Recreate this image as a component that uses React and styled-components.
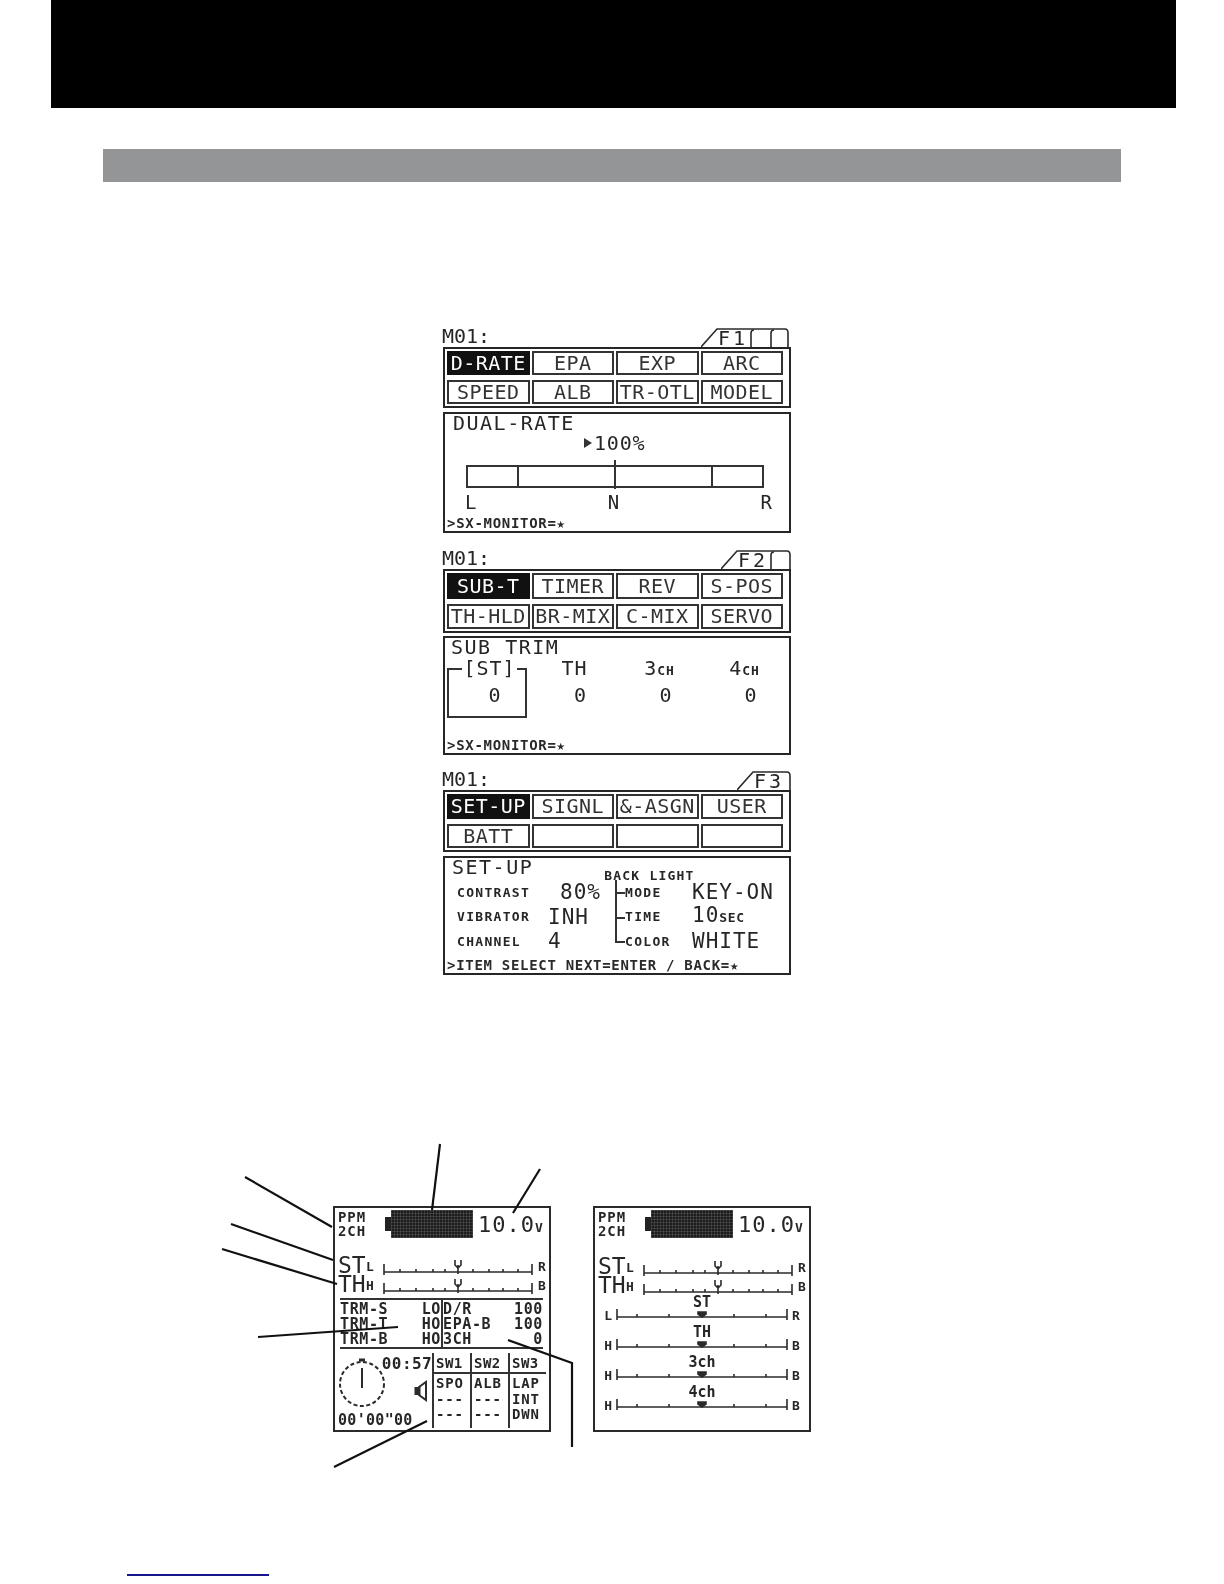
import React from "react";
import styled, { createGlobalStyle } from "styled-components";

const Global = createGlobalStyle`
  html, body { margin: 0; padding: 0; background: #fff; }
  body { font-family: "DejaVu Sans Mono", "Liberation Mono", monospace; color: #262626; }
`;
const Page = styled.div`position: relative; width: 1224px; height: 1584px; overflow: hidden; background: #fff;`;
const BlackHeader = styled.header`width: 1125px; height: 108px; margin-left: 51px; background: #000;`;
const SectionBar = styled.div`width: 1018px; height: 33px; margin: 41px 0 0 103px; background: #939597;`;
const ScreenStack = styled.div`display: flex; flex-direction: column; width: 348px; margin: 145px 0 0 443px; filter: blur(.35px);`;
const Screen = styled.section`display: flex; flex-direction: column; width: 348px; height: ${p => p.$h}px;`;
const TopRow = styled.div`display: flex; justify-content: space-between; height: 20px; font-size: 20px; line-height: 19px; margin-left: -1px;`;
const Tab = styled.div`position: relative; width: ${p => p.$w}px; height: 20px; font-size: 20px; line-height: 22px; margin-right: ${p => p.$mr}px;`;
const TabSvg = styled.svg`position: absolute; left: 0; top: 0;`;
const TabLabel = styled.span`position: absolute; left: 17px; top: 0; letter-spacing: 3px; font-size: 20px;`;
const MenuPanel = styled.div`display: grid; grid-template-columns: repeat(4, 1fr); grid-template-rows: 1fr 1fr; gap: 5px 2px; height: ${p => p.$h}px; box-sizing: border-box; border: 2px solid #262626; padding: 2px 6px 2px 2px;`;
const MenuCell = styled.div`
  box-sizing: border-box; border: 2px solid ${p => p.$active ? "#111" : "#333"};
  background: ${p => p.$active ? "#111" : "#fff"}; color: ${p => p.$active ? "#fff" : "#333"};
  display: flex; align-items: center; justify-content: center; overflow: hidden;
  font-size: 20px; line-height: 20px; letter-spacing: .5px; white-space: nowrap;
`;
const Detail = styled.div`display: flex; flex-direction: column; position: relative; height: ${p => p.$h}px; box-sizing: border-box; border: 2px solid #262626; margin-top: ${p => p.$mt}px; padding: 0 2px;`;
const Title = styled.div`font-size: 20px; line-height: 19px; letter-spacing: 1.5px; padding-left: ${p => p.$left || 6}px; white-space: pre;`;
const Status = styled.div`margin-top: auto; font-size: 14px; font-weight: bold; letter-spacing: .7px; line-height: 15px; white-space: pre; color: #2a2a2a;`;
const RateValue = styled.div`font-size: 20px; line-height: 20px; letter-spacing: .8px; margin-left: 137px; display: flex; align-items: center; gap: 2px;`;
const Pointer = styled.span`width: 0; height: 0; border-left: 8px solid #333; border-top: 5px solid transparent; border-bottom: 5px solid transparent;`;
const RateBar = styled.div`display: flex; position: relative; box-sizing: border-box; width: 298px; height: 23px; margin: 12px 0 0 19px; border: 2px solid #333;`;
const RateSeg = styled.div`flex: ${p => p.$grow} 0 0; border-right: ${p => p.$last ? "0" : "2px solid #333"}; position: relative;
  ${p => p.$tall && `&::after { content: ""; position: absolute; right: -2px; top: -7px; bottom: -3px; width: 2px; background: #333; }`}`;
const RateLabels = styled.div`display: flex; justify-content: space-between; width: 307px; margin: 4px 0 0 18px; font-size: 19px; line-height: 20px;`;
const RateMid = styled.span`margin-right: 10px;`;
const ChannelGrid = styled.div`display: grid; grid-template-columns: repeat(4, 85px); height: 56px;`;
const ChannelCol = styled.div`position: relative; display: flex; flex-direction: column; align-items: center; font-size: 20px; line-height: 22px; box-sizing: border-box;`;
const ChannelHead = styled.div`height: 27px; display: flex; align-items: baseline; letter-spacing: 1px; background: #fff; padding: 0 1px; position: relative; z-index: 1;`;
const ChannelUnit = styled.span`font-size: 13px; font-weight: bold;`;
const ChannelVal = styled.div`padding-left: ${p => p.$pl}px;`;
const TrimBox = styled.div`position: absolute; left: 0; top: 11px; width: 80px; height: 50px; box-sizing: border-box; border: 2px solid #333;`;
const SetupHead = styled.div`display: flex; align-items: flex-end;`;
const BackLight = styled.div`font-size: 13px; font-weight: bold; letter-spacing: 1.2px; line-height: 14px; margin: 0 0 -6px 71px;`;
const SetupGrid = styled.div`display: grid; grid-template-columns: 90px 64px 14px 67px 1fr; grid-auto-rows: 24.5px; align-items: center; margin: 3px 0 0 10px;`;
const SetupLabel = styled.div`font-size: 13px; font-weight: bold; letter-spacing: 1.3px; white-space: nowrap;`;
const SetupValue = styled.div`font-size: 21px; letter-spacing: 1px; line-height: 22px; padding-left: ${p => p.$pl || 0}px; white-space: nowrap;`;
const Unit = styled.span`font-size: 13px; font-weight: bold; letter-spacing: .6px;`;
const TreeCell = styled.div`position: relative; align-self: stretch;
  &::before { content: ""; position: absolute; left: 4px; top: 0; width: 2px; height: ${p => p.$last ? "50%" : "100%"}; background: #333; }
  &::after { content: ""; position: absolute; left: 4px; top: 50%; width: 10px; height: 2px; background: #333; }`;
const MonitorRow = styled.div`display: flex; gap: 42px; margin: 231px 0 0 333px;`;
const Monitor = styled.section`width: 218px; height: 226px; box-sizing: border-box; border: 2px solid #2a2a2a; display: flex; flex-direction: column; filter: blur(.3px);`;
const MonitorTop = styled.div`display: flex; align-items: flex-start; height: 38px; padding: 2px 0 0 3px;`;
const Ppm = styled.div`font-size: 14px; font-weight: bold; line-height: 14px; letter-spacing: .9px; width: 47px;`;
const Battery = styled.div`display: flex; align-items: center; width: 88px; height: 28px;`;
const BatteryNub = styled.div`width: 6px; height: 14px; background: #222;`;
const BatteryBody = styled.div`flex: 1; height: 28px; background-color: #1c1c1c;
  background-image: repeating-linear-gradient(90deg, rgba(255,255,255,.12) 0 1px, transparent 1px 3px), repeating-linear-gradient(0deg, rgba(255,255,255,.12) 0 1px, transparent 1px 3px);`;
const Voltage = styled.div`font-size: 22px; line-height: 30px; letter-spacing: 1px; margin-left: 5px; white-space: nowrap;`;
const VoltUnit = styled.span`font-size: 13px; font-weight: bold;`;
const ScaleStack = styled.div`display: flex; flex-direction: column; margin-top: 9px;`;
const ScaleRow = styled.div`display: flex; align-items: flex-end; height: 19px; padding-left: 3px;`;
const BigLabel = styled.div`font-size: 23px; line-height: 19px; width: 28px;`;
const SmallLabel = styled.div`font-size: 13px; font-weight: bold; line-height: 17px; width: 17px;`;
const EndLabel = styled.div`font-size: 13px; font-weight: bold; line-height: 17px; margin-left: 5px;`;
const TrimTable = styled.div`display: grid; grid-template-columns: 101px 1fr; height: 53px; box-sizing: border-box; margin: 4px 6px 0 5px; border-top: 2px solid #333; border-bottom: 2px solid #333;`;
const TableCol = styled.div`display: grid; grid-auto-rows: 15px; padding-top: 2px; font-size: 15px; font-weight: bold; line-height: 15px; letter-spacing: .6px; ${p => p.$divided && "border-left: 2px solid #333;"}`;
const TableRow = styled.div`display: flex; justify-content: space-between; white-space: nowrap;`;
const BottomArea = styled.div`display: flex; flex: 1; padding: 4px 3px 2px 3px;`;
const ClockSide = styled.div`display: flex; flex-direction: column; width: 96px;`;
const ClockTop = styled.div`display: flex; height: 57px; padding-top: 3px; box-sizing: border-box;`;
const ClockMeta = styled.div`display: flex; flex-direction: column; align-items: flex-end; margin-left: -9px; flex: 1; font-size: 16px; font-weight: bold; letter-spacing: .4px; line-height: 16px;`;
const SpeakerSvg = styled.svg`margin: 8px 4px 0 0;`;
const Elapsed = styled.div`font-size: 15px; font-weight: bold; letter-spacing: .3px; line-height: 16px; margin-top: 2px; white-space: pre;`;
const SwitchGrid = styled.div`display: grid; grid-template-columns: repeat(3, 38px); grid-template-rows: 21px 1fr; flex: 1;`;
const SwitchHead = styled.div`border-left: 2px solid #333; border-bottom: 2px solid #333; font-size: 14px; font-weight: bold; line-height: 16px; padding: 2px 0 0 2px; letter-spacing: .5px;`;
const SwitchCol = styled.div`border-left: 2px solid #333; font-size: 14px; font-weight: bold; line-height: 15.5px; padding: 2px 0 0 2px; letter-spacing: .8px; white-space: pre;`;
const ChannelBlock = styled.div`display: flex; flex-direction: column; align-items: center; height: 30px;`;
const ChannelName = styled.div`font-size: 15px; font-weight: bold; line-height: 15px;`;
const ChannelScale = styled.div`display: flex; align-items: center; justify-content: center; gap: 4px; height: 15px; margin-top: -2px; font-size: 13px; font-weight: bold; line-height: 15px;`;
const ChannelStack = styled.div``;
const Leaders = styled.svg`position: absolute; left: 0; top: 0; pointer-events: none;`;
const BlueRule = styled.div`width: 142px; height: 1.5px; margin: 142px 0 0 127px; background: #16168c;`;

const C = "#2b2b2b";
function FolderTab({ label, w, mr, dividers }) {
  return (
    <Tab $w={w} $mr={mr}>
      <TabSvg width={w} height="20" viewBox={`0 0 ${w} 20`} fill="none" stroke={C} strokeWidth="1.6">
        <path d={`M0 20 L16 2 H${w - 4} Q${w - 1} 2 ${w - 1} 6 V20`} />
        {dividers.map(x => <path key={x} d={`M${x} 20 V6 Q${x} 3 ${x + 3} 3`} />)}
      </TabSvg>
      <TabLabel>{label}</TabLabel>
    </Tab>
  );
}

function Menu({ items, h }) {
  return (
    <MenuPanel $h={h}>
      {items.map((t, i) => <MenuCell key={i} $active={i === 0}>{t}</MenuCell>)}
    </MenuPanel>
  );
}

function Scale({ width, ticks, marker }) {
  const h = marker === "y" ? 18 : 15;
  const y = marker === "y" ? 15 : 9;
  const mid = width / 2;
  return (
    <svg width={width} height={h} viewBox={`0 0 ${width} ${h}`} fill="none" stroke={C} strokeWidth="1.6" style={{ display: "block" }}>
      <path d={`M1 ${y - 8} V${y + 3} M1 ${y} H${width - 1} M${width - 1} ${y - 8} V${y + 3}`} />
      {ticks.map(t => <path key={t} d={`M${t} ${y - 3} V${y}`} />)}
      {marker === "y"
        ? <path d={`M${mid - 3} ${y - 12} V${y - 7} L${mid} ${y - 4} L${mid + 3} ${y - 7} V${y - 12} M${mid} ${y - 7} V${y + 2}`} />
        : <path d={`M${mid - 4} ${y - 5} H${mid + 4} V${y - 3} L${mid} ${y} L${mid - 4} ${y - 3} Z`} fill={C} />}
    </svg>
  );
}

function MonitorHeader() {
  const topTicks = [17, 33, 50, 62, 90, 106, 120, 135];
  return (
    <>
      <MonitorTop>
        <Ppm>PPM<br />2CH</Ppm>
        <Battery><BatteryNub /><BatteryBody /></Battery>
        <Voltage>10.0<VoltUnit>V</VoltUnit></Voltage>
      </MonitorTop>
      <ScaleStack>
        <ScaleRow>
          <BigLabel>ST</BigLabel><SmallLabel>L</SmallLabel>
          <Scale width={150} ticks={topTicks} marker="y" /><EndLabel>R</EndLabel>
        </ScaleRow>
        <ScaleRow>
          <BigLabel>TH</BigLabel><SmallLabel>H</SmallLabel>
          <Scale width={150} ticks={topTicks} marker="y" /><EndLabel>B</EndLabel>
        </ScaleRow>
      </ScaleStack>
    </>
  );
}

const chanTicks = [21, 53, 118, 150];
function ChannelRow({ name, left, right }) {
  return (
    <ChannelBlock>
      <ChannelName>{name}</ChannelName>
      <ChannelScale>
        <span>{left}</span><Scale width={172} ticks={chanTicks} marker="tri" /><span>{right}</span>
      </ChannelScale>
    </ChannelBlock>
  );
}

export default function App() {
  const dash = "---";
  return (
    <Page>
      <Global />
      <BlackHeader />
      <SectionBar />
      <ScreenStack>
        <Screen $h={222}>
          <TopRow>
            <span>M01:</span>
            <FolderTab label="F1" w={88} mr={2} dividers={[50, 70]} />
          </TopRow>
          <Menu h={61} items={["D-RATE", "EPA", "EXP", "ARC", "SPEED", "ALB", "TR-OTL", "MODEL"]} />
          <Detail $h={121} $mt={4}>
            <Title $left={6}>DUAL-RATE</Title>
            <RateValue><Pointer />100%</RateValue>
            <RateBar>
              <RateSeg $grow={50} />
              <RateSeg $grow={98} $tall />
              <RateSeg $grow={98} />
              <RateSeg $grow={50} $last />
            </RateBar>
            <RateLabels><span>L</span><RateMid>N</RateMid><span>R</span></RateLabels>
            <Status>{">SX-MONITOR=★"}</Status>
          </Detail>
        </Screen>
        <Screen $h={221}>
          <TopRow>
            <span>M01:</span>
            <FolderTab label="F2" w={70} mr={0} dividers={[50]} />
          </TopRow>
          <Menu h={64} items={["SUB-T", "TIMER", "REV", "S-POS", "TH-HLD", "BR-MIX", "C-MIX", "SERVO"]} />
          <Detail $h={119} $mt={3}>
            <Title $left={4}>SUB TRIM</Title>
            <ChannelGrid>
              <ChannelCol>
                <TrimBox />
                <ChannelHead>[ST]</ChannelHead>
                <ChannelVal $pl={10}>0</ChannelVal>
              </ChannelCol>
              <ChannelCol>
                <ChannelHead>TH</ChannelHead>
                <ChannelVal $pl={11}>0</ChannelVal>
              </ChannelCol>
              <ChannelCol>
                <ChannelHead>3<ChannelUnit>CH</ChannelUnit></ChannelHead>
                <ChannelVal $pl={12}>0</ChannelVal>
              </ChannelCol>
              <ChannelCol>
                <ChannelHead>4<ChannelUnit>CH</ChannelUnit></ChannelHead>
                <ChannelVal $pl={12}>0</ChannelVal>
              </ChannelCol>
            </ChannelGrid>
            <Status>{">SX-MONITOR=★"}</Status>
          </Detail>
        </Screen>
        <Screen $h={205}>
          <TopRow>
            <span>M01:</span>
            <FolderTab label="F3" w={54} mr={0} dividers={[]} />
          </TopRow>
          <Menu h={62} items={["SET-UP", "SIGNL", "&-ASGN", "USER", "BATT", "", "", ""]} />
          <Detail $h={119} $mt={4}>
            <SetupHead>
              <Title $left={5}>SET-UP</Title>
              <BackLight>BACK LIGHT</BackLight>
            </SetupHead>
            <SetupGrid>
              <SetupLabel>CONTRAST</SetupLabel>
              <SetupValue $pl={13}>80%</SetupValue>
              <TreeCell />
              <SetupLabel>MODE</SetupLabel>
              <SetupValue>KEY-ON</SetupValue>
              <SetupLabel>VIBRATOR</SetupLabel>
              <SetupValue $pl={1}>INH</SetupValue>
              <TreeCell />
              <SetupLabel>TIME</SetupLabel>
              <SetupValue>10<Unit>SEC</Unit></SetupValue>
              <SetupLabel>CHANNEL</SetupLabel>
              <SetupValue $pl={1}>4</SetupValue>
              <TreeCell $last />
              <SetupLabel>COLOR</SetupLabel>
              <SetupValue>WHITE</SetupValue>
            </SetupGrid>
            <Status>{">ITEM SELECT NEXT=ENTER / BACK=★"}</Status>
          </Detail>
        </Screen>
      </ScreenStack>
      <MonitorRow>
        <Monitor>
          <MonitorHeader />
          <TrimTable>
            <TableCol>
              <TableRow><span>TRM-S</span><span>LO</span></TableRow>
              <TableRow><span>TRM-T</span><span>HO</span></TableRow>
              <TableRow><span>TRM-B</span><span>HO</span></TableRow>
            </TableCol>
            <TableCol $divided>
              <TableRow><span>D/R</span><span>100</span></TableRow>
              <TableRow><span>EPA-B</span><span>100</span></TableRow>
              <TableRow><span>3CH</span><span>0</span></TableRow>
            </TableCol>
          </TrimTable>
          <BottomArea>
            <ClockSide>
              <ClockTop>
                <svg width="50" height="54" viewBox="0 0 50 54" fill="none" stroke={C}>
                  <circle cx="24" cy="28" r="22" strokeWidth="2" strokeDasharray="4 2.5" />
                  <path d="M24 12 V32" strokeWidth="2" />
                  <path d="M21 4 H27" strokeWidth="3" />
                </svg>
                <ClockMeta>
                  <span>00:57</span>
                  <SpeakerSvg width="14" height="22" viewBox="0 0 14 22" fill="none" stroke={C} strokeWidth="2">
                    <path d="M5 7 L12 2 V20 L5 15 Z" />
                    <path d="M2 7 V15 M5 7 V15" strokeWidth="3" />
                  </SpeakerSvg>
                </ClockMeta>
              </ClockTop>
              <Elapsed>{"00'00\"00"}</Elapsed>
            </ClockSide>
            <SwitchGrid>
              <SwitchHead>SW1</SwitchHead>
              <SwitchHead>SW2</SwitchHead>
              <SwitchHead>SW3</SwitchHead>
              <SwitchCol>{`SPO\n${dash}\n${dash}`}</SwitchCol>
              <SwitchCol>{`ALB\n${dash}\n${dash}`}</SwitchCol>
              <SwitchCol>{"LAP\nINT\nDWN"}</SwitchCol>
            </SwitchGrid>
          </BottomArea>
        </Monitor>
        <Monitor>
          <MonitorHeader />
          <ChannelStack>
            <ChannelRow name="ST" left="L" right="R" />
            <ChannelRow name="TH" left="H" right="B" />
            <ChannelRow name="3ch" left="H" right="B" />
            <ChannelRow name="4ch" left="H" right="B" />
          </ChannelStack>
        </Monitor>
      </MonitorRow>
      <BlueRule />
      <Leaders width="1224" height="1584" viewBox="0 0 1224 1584" fill="none" stroke="#111" strokeWidth="2.2">
        <path d="M245 1177 L332 1227" />
        <path d="M231 1224 L333 1260" />
        <path d="M222 1249 L337 1284" />
        <path d="M258 1337 L398 1327" />
        <path d="M440 1144 L432 1210" />
        <path d="M540 1169 L513 1213" />
        <path d="M508 1340 L572 1363 V1447" />
        <path d="M427 1421 L334 1467" />
      </Leaders>
    </Page>
  );
}
